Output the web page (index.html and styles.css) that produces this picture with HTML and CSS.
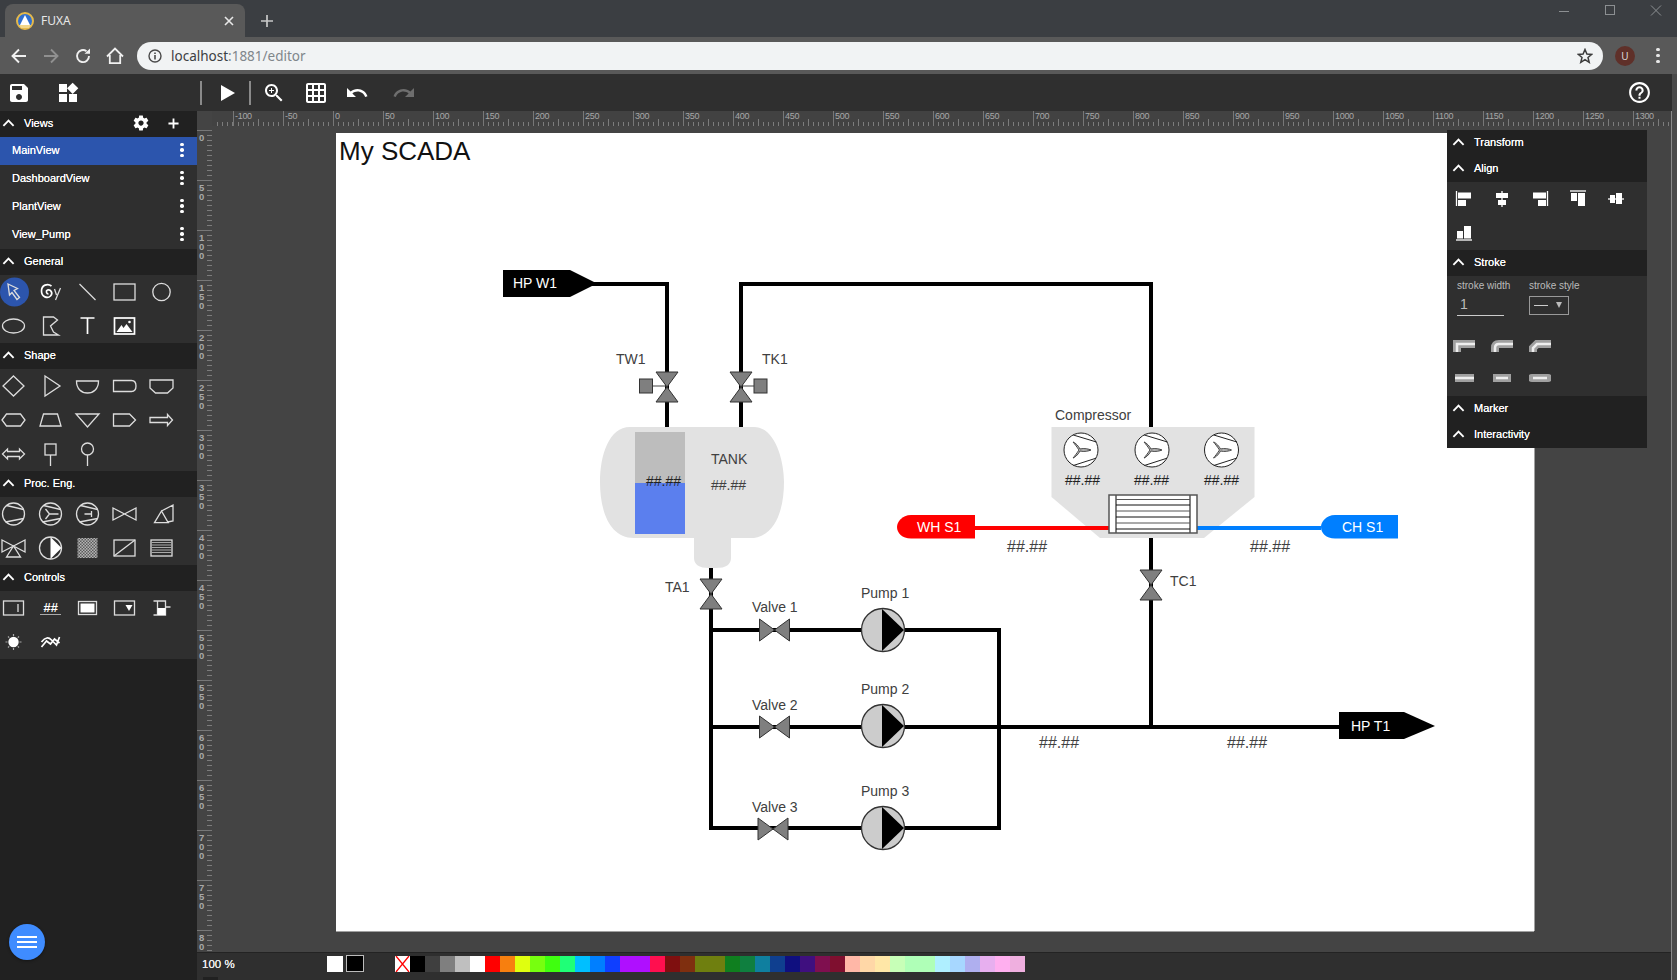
FILE: index.html
```html
<!DOCTYPE html>
<html lang="en">
<head>
<meta charset="utf-8">
<title>FUXA</title>
<link rel="stylesheet" href="styles.css">
</head>
<body>
<div class="tabstrip">
  <div class="tab">
    <svg class="favicon" viewBox="-9 -9 18 18" width="18" height="18"><circle r="8" fill="#2f6fd0" stroke="#e5b94a" stroke-width="2"/><path d="M-5,4 L0,-6 L5,4 Z" fill="#fff"/><path d="M-6,4 H6 L4,7 H-4 Z" fill="#f2d68a"/></svg>
    <span class="tab-title">FUXA</span>
    <svg class="tab-close" viewBox="0 0 10 10" width="10" height="10"><path d="M1,1 L9,9 M9,1 L1,9" stroke="#e8e8e8" stroke-width="1.6"/></svg>
  </div>
  <svg class="new-tab" viewBox="0 0 14 14" width="14" height="14"><path d="M7,1 V13 M1,7 H13" stroke="#c8c8c8" stroke-width="1.7"/></svg>
  <div class="winctl">
    <svg viewBox="0 0 12 12" width="12" height="12"><path d="M1,6.5 H11" stroke="#8c8f92"/></svg>
    <svg viewBox="0 0 12 12" width="12" height="12"><rect x="1.5" y=".5" width="9" height="9" fill="none" stroke="#8c8f92"/></svg>
    <svg viewBox="0 0 12 12" width="12" height="12"><path d="M1,0.5 L11,10.5 M11,0.5 L1,10.5" stroke="#8c8f92"/></svg>
  </div>
</div>
<div class="addrbar">
  <div class="navs">
    <svg viewBox="0 0 18 18" width="18" height="18"><path d="M16,9 H2.5 M9,2.5 L2.5,9 L9,15.5" fill="none" stroke="#f0f0f0" stroke-width="1.9"/></svg>
    <svg viewBox="0 0 18 18" width="18" height="18"><path d="M2,9 H15.5 M9,2.5 L15.5,9 L9,15.5" fill="none" stroke="#909090" stroke-width="1.9"/></svg>
    <svg viewBox="0 0 18 18" width="18" height="18"><path d="M15,9 A6,6 0 1 1 12.5,4.2" fill="none" stroke="#f0f0f0" stroke-width="1.9"/><path d="M10.5,6.8 H16 V1.5 Z" fill="#f0f0f0"/></svg>
    <svg viewBox="0 0 18 18" width="18" height="18"><path d="M1,9.5 L9,1.5 L17,9.5 M3.8,8 V16.2 H14.2 V8" fill="none" stroke="#f0f0f0" stroke-width="1.8"/></svg>
  </div>
  <div class="omnibox">
    <svg class="info" viewBox="0 0 14 14" width="14" height="14"><circle cx="7" cy="7" r="6" fill="none" stroke="#4a4a4a" stroke-width="1.4"/><path d="M7,6 V10.5 M7,3.5 V5" stroke="#4a4a4a" stroke-width="1.6"/></svg>
    <span class="url"><span class="url-host">localhost</span>:1881/editor</span>
    <svg class="star" viewBox="0 0 16 16" width="16" height="16"><path d="M8,1.5 L9.9,6 L14.7,6.4 L11,9.5 L12.2,14.3 L8,11.7 L3.8,14.3 L5,9.5 L1.3,6.4 L6.1,6 Z" fill="none" stroke="#3c3c3c" stroke-width="1.5"/></svg>
  </div>
  <div class="avatar">U</div>
  <div class="kebab-chrome"><i></i><i></i><i></i></div>
</div>
<div class="appframe">
<div class="app">
  <div class="toolbar">
    <div class="tb-group first">
      <svg class="tb-icon" viewBox="0 0 24 24"><path d="M17 3H5c-1.11 0-2 .9-2 2v14c0 1.1.89 2 2 2h14c1.1 0 2-.9 2-2V7l-4-4zm-5 16c-1.66 0-3-1.34-3-3s1.34-3 3-3 3 1.34 3 3-1.34 3-3 3zm3-10H5V5h10v4z"/></svg>
      <svg class="tb-icon" viewBox="0 0 24 24"><path d="M13 13v8h8v-8h-8zM3 21h8v-8H3v8zM3 3v8h8V3H3zm13.66-1.31L11 7.34 16.66 13l5.66-5.66-5.66-5.65z"/></svg>
    </div>
    <div class="tb-sep"></div>
    <svg class="tb-icon play" viewBox="0 0 24 24"><path d="M6 4v16l14-8z"/></svg>
    <div class="tb-sep"></div>
    <div class="tb-group second">
      <svg class="tb-icon" viewBox="0 0 24 24"><path d="M15.5 14h-.79l-.28-.27C15.41 12.59 16 11.11 16 9.5 16 5.91 13.09 3 9.5 3S3 5.91 3 9.5 5.91 16 9.5 16c1.61 0 3.09-.59 4.23-1.57l.27.28v.79l5 4.99L20.49 19l-4.99-5zm-6 0C7.01 14 5 11.99 5 9.5S7.01 5 9.5 5 14 7.01 14 9.5 11.99 14 9.5 14zm2.5-4h-2v2H9v-2H7V9h2V7h1v2h2v1z"/></svg>
      <svg class="tb-icon" viewBox="0 0 24 24"><path d="M20 2H4c-1.1 0-2 .9-2 2v16c0 1.1.9 2 2 2h16c1.1 0 2-.9 2-2V4c0-1.1-.9-2-2-2zM8 20H4v-4h4v4zm0-6H4v-4h4v4zm0-6H4V4h4v4zm6 12h-4v-4h4v4zm0-6h-4v-4h4v4zm0-6h-4V4h4v4zm6 12h-4v-4h4v4zm0-6h-4v-4h4v4zm0-6h-4V4h4v4z"/></svg>
      <svg class="tb-icon" viewBox="0 0 24 24"><path d="M12.5 8c-2.65 0-5.05.99-6.9 2.6L2 7v9h9l-3.62-3.62c1.39-1.16 3.16-1.88 5.12-1.88 3.54 0 6.55 2.31 7.6 5.5l2.37-.78C21.08 11.03 17.15 8 12.5 8z"/></svg>
      <svg class="tb-icon redo" viewBox="0 0 24 24"><path d="M18.4 10.6C16.55 8.99 14.15 8 11.5 8c-4.65 0-8.58 3.03-9.96 7.22L3.9 16c1.05-3.19 4.05-5.5 7.6-5.5 1.95 0 3.73.72 5.12 1.88L13 16h9V7l-3.6 3.6z"/></svg>
    </div>
    <svg class="tb-icon help" viewBox="0 0 24 24"><path d="M11 18h2v-2h-2v2zm1-16C6.48 2 2 6.48 2 12s4.48 10 10 10 10-4.48 10-10S17.52 2 12 2zm0 18c-4.41 0-8-3.59-8-8s3.59-8 8-8 8 3.59 8 8-3.59 8-8 8zm0-14c-2.21 0-4 1.79-4 4h2c0-1.1.9-2 2-2s2 .9 2 2c0 2-3 1.75-3 5h2c0-2.25 3-2.5 3-5 0-2.21-1.79-4-4-4z"/></svg>
  </div>
  <div class="main">
    <aside class="side">
      <div class="sec-head">
        <svg class="chev" viewBox="0 0 14 8"><path d="M1.5,7 L7,1.5 L12.5,7" /></svg>
        <span class="sec-title">Views</span>
        <svg class="gear" viewBox="0 0 24 24"><path d="M19.43 12.98c.04-.32.07-.64.07-.98s-.03-.66-.07-.98l2.11-1.65c.19-.15.24-.42.12-.64l-2-3.46c-.12-.22-.39-.3-.61-.22l-2.49 1c-.52-.4-1.08-.73-1.69-.98l-.38-2.65C14.46 2.18 14.25 2 14 2h-4c-.25 0-.46.18-.49.42l-.38 2.65c-.61.25-1.17.59-1.69.98l-2.49-1c-.23-.09-.49 0-.61.22l-2 3.46c-.13.22-.07.49.12.64l2.11 1.65c-.04.32-.07.65-.07.98s.03.66.07.98l-2.11 1.65c-.19.15-.24.42-.12.64l2 3.46c.12.22.39.3.61.22l2.49-1c.52.4 1.08.73 1.69.98l.38 2.65c.03.24.24.42.49.42h4c.25 0 .46-.18.49-.42l.38-2.65c.61-.25 1.17-.59 1.69-.98l2.49 1c.23.09.49 0 .61-.22l2-3.46c.12-.22.07-.49-.12-.64l-2.11-1.65zM12 15.5c-1.93 0-3.5-1.57-3.5-3.5s1.57-3.5 3.5-3.5 3.5 1.57 3.5 3.5-1.57 3.5-3.5 3.5z"/></svg>
        <svg class="plus" viewBox="0 0 12 12"><path d="M6,0.5 V11.5 M0.5,6 H11.5"/></svg>
      </div>
      <div class="view-row active"><span>MainView</span><div class="dots"><i></i><i></i><i></i></div></div>
      <div class="view-row"><span>DashboardView</span><div class="dots"><i></i><i></i><i></i></div></div>
      <div class="view-row"><span>PlantView</span><div class="dots"><i></i><i></i><i></i></div></div>
      <div class="view-row"><span>View_Pump</span><div class="dots"><i></i><i></i><i></i></div></div>

      <div class="sec-head"><svg class="chev" viewBox="0 0 14 8"><path d="M1.5,7 L7,1.5 L12.5,7"/></svg><span class="sec-title">General</span></div>
      <div class="tools">
        <svg class="ti" viewBox="-18.5 -17 37 34"><circle cx="1" r="14.5" class="sel"/><path d="M-5.5,-8 L4,-3.5 L.5,-1.500 L6,5.500 L3.500,7.500 L-1.500,.5 L-4,3 Z" class="w"/></svg>
        <svg class="ti" viewBox="-18.5 -17 37 34"><path d="M1,-6 C-3,-9 -9,-7 -9,-1 C-9,5 -3,7 0,4 C3,1 0,-3 -3,-2 C-5,-1 -4,2 -2,2" class="w2"/><path d="M4,-3 L6,3 M10,-4 L5,8" class="w"/></svg>
        <svg class="ti" viewBox="-18.5 -17 37 34"><path d="M-8,-8 L8,8" class="w"/></svg>
        <svg class="ti" viewBox="-18.5 -17 37 34"><rect x="-10.5" y="-8" width="21" height="16" class="w"/></svg>
        <svg class="ti" viewBox="-18.5 -17 37 34"><circle r="8.7" class="w"/></svg>
        <svg class="ti" viewBox="-18.5 -17 37 34"><ellipse rx="11" ry="7" class="w"/></svg>
        <svg class="ti" viewBox="-18.5 -17 37 34"><path d="M-7,9 V-9 H3 L7,-6 L0,0 L3,6 L8,9 Z" class="w"/></svg>
        <svg class="ti" viewBox="-18.5 -17 37 34"><path d="M-7,-8 H7 M0,-8 V8" class="w2"/></svg>
        <svg class="ti" viewBox="-18.5 -17 37 34"><rect x="-10" y="-8" width="20" height="16" class="w2"/><path d="M-8,6 L-3,-1 L-1,2 L2,-2 L8,6 Z" class="f"/><circle cx="5" cy="-4" r="1.3" class="f"/></svg>
      </div>

      <div class="sec-head"><svg class="chev" viewBox="0 0 14 8"><path d="M1.5,7 L7,1.5 L12.5,7"/></svg><span class="sec-title">Shape</span></div>
      <div class="tools">
        <svg class="ti" viewBox="-18.5 -17 37 34"><path d="M0,-10 L10.5,0 L0,10 L-10.5,0 Z" class="w"/></svg>
        <svg class="ti" viewBox="-18.5 -17 37 34"><path d="M-5.5,-10 L9.5,0 L-5.5,10 Z" class="w"/></svg>
        <svg class="ti" viewBox="-18.5 -17 37 34"><path d="M-11,-5 H11 C11,3 6,7 0,7 C-6,7 -11,3 -11,-5 Z" class="w"/></svg>
        <svg class="ti" viewBox="-18.5 -17 37 34"><path d="M-11,-5.5 H7 C10,-5.5 11.5,-3 11.5,0 C11.5,3 10,5.5 7,5.5 H-11 Z" class="w"/></svg>
        <svg class="ti" viewBox="-18.5 -17 37 34"><path d="M-11.5,-6 H11.5 V2 L6,7 H-6 L-11.5,2 Z" class="w"/></svg>
        <svg class="ti" viewBox="-18.5 -17 37 34"><path d="M-11.5,0 L-7,-6 H7 L11.5,0 L7,6 H-7 Z" class="w"/></svg>
        <svg class="ti" viewBox="-18.5 -17 37 34"><path d="M-7,-6 H7 L10.5,6 H-10.5 Z" class="w"/></svg>
        <svg class="ti" viewBox="-18.5 -17 37 34"><path d="M-11.5,-6 H11.5 L0,7 Z" class="w"/></svg>
        <svg class="ti" viewBox="-18.5 -17 37 34"><path d="M-11,-6 H5 L11,0 L5,6 H-11 Z" class="w"/></svg>
        <svg class="ti" viewBox="-18.5 -17 37 34"><path d="M-11.5,-2.5 H6 V-5.5 L11,0 L6,5.5 V2.5 H-11.5 Z" class="w"/></svg>
        <svg class="ti" viewBox="-18.5 -17 37 34"><path d="M-11,0 L-6,-5 V-2.5 H6 V-5 L11,0 L6,5 V2.5 H-6 V5 Z" class="w"/></svg>
        <svg class="ti" viewBox="-18.5 -17 37 34"><rect x="-5.5" y="-10" width="11" height="11" class="w"/><path d="M0,1 V12" class="w"/></svg>
        <svg class="ti" viewBox="-18.5 -17 37 34"><circle cy="-5" r="6" class="w"/><path d="M0,1 V12" class="w"/></svg>
      </div>

      <div class="sec-head"><svg class="chev" viewBox="0 0 14 8"><path d="M1.5,7 L7,1.5 L12.5,7"/></svg><span class="sec-title">Proc. Eng.</span></div>
      <div class="tools">
        <svg class="ti" viewBox="-18.5 -17 37 34"><circle r="11" class="w"/><path d="M-7,-8.5 L10,-4.5 M-8,8 L10,4.5" class="w"/></svg>
        <svg class="ti" viewBox="-18.5 -17 37 34"><circle r="11" class="w"/><path d="M-7,-8.5 L10,-4.5 M-8,8 L10,4.5 M-1,0 H8 M-1,0 L-5,-5 M-1,0 L-5,5" class="w"/></svg>
        <svg class="ti" viewBox="-18.5 -17 37 34"><circle r="11" class="w"/><path d="M-7,-8.5 L10,-4.5 M-8,8 L10,4.5 M-3,0 H4 M4,-3 V3" class="w"/></svg>
        <svg class="ti" viewBox="-18.5 -17 37 34"><path d="M-11.5,-6 L11.5,6 V-6 L-11.5,6 Z" class="w"/></svg>
        <svg class="ti" viewBox="-18.5 -17 37 34"><path d="M-7,8.7 H6.700 L0,-3 Z M0,-3 L11.500,-9 V7 L6,8" class="w"/></svg>
        <svg class="ti" viewBox="-18.5 -17 37 34"><path d="M-11.5,-8 L11.5,4 V-8 L-11.5,4 Z M-7,9 H7 L0,-2 Z" class="w"/></svg>
        <svg class="ti" viewBox="-18.5 -17 37 34"><circle r="11" class="w"/><path d="M0,-11 L11,0 L0,11 Z" class="f"/></svg>
        <svg class="ti" viewBox="-18.5 -17 37 34"><defs><pattern id="chk" width="3" height="3" patternUnits="userSpaceOnUse"><rect width="3" height="3" fill="#e0e0e0"/><rect width="1.500" height="1.500" fill="#2f2f2f"/><rect x="1.500" y="1.500" width="1.500" height="1.500" fill="#2f2f2f"/></pattern></defs><rect x="-10" y="-10" width="20" height="20" fill="url(#chk)"/></svg>
        <svg class="ti" viewBox="-18.5 -17 37 34"><rect x="-10.5" y="-8" width="21" height="16" class="w"/><path d="M-10.5,8 L10.5,-8" class="w"/></svg>
        <svg class="ti" viewBox="-18.5 -17 37 34"><rect x="-10.5" y="-8" width="21" height="16" class="w"/><path d="M-10,-5.5 H10 M-10,-3 H10 M-10,-.5 H10 M-10,2 H10 M-10,4.5 H10" class="g"/></svg>
      </div>

      <div class="sec-head"><svg class="chev" viewBox="0 0 14 8"><path d="M1.5,7 L7,1.5 L12.5,7"/></svg><span class="sec-title">Controls</span></div>
      <div class="tools">
        <svg class="ti" viewBox="-18.5 -17 37 34"><rect x="-10" y="-7" width="20" height="14" class="w"/><path d="M4.5,-4 V4" class="w"/></svg>
        <div class="ti hash"><span>##</span></div>
        <svg class="ti" viewBox="-18.5 -17 37 34"><rect x="-9" y="-6.5" width="18" height="13" class="w"/><rect x="-7" y="-4.5" width="14" height="9" class="f"/></svg>
        <svg class="ti" viewBox="-18.5 -17 37 34"><rect x="-10" y="-7" width="20" height="14" class="w"/><path d="M1,-3 H8 L4.5,3 Z" class="f"/></svg>
        <svg class="ti" viewBox="-18.5 -17 37 34"><path d="M-8,-7 H-4 M-8,7 H-4 M-4,-7 H4 V7 H-4 Z M4,-1 H9" class="w"/><rect x="-4" y="0" width="8" height="7" class="f"/></svg>
        <svg class="ti" viewBox="-18.5 -17 37 34"><circle r="5.200" class="f"/><path d="M0,-8 V-6 M0,6 V8 M-8,0 H-6 M6,0 H8 M-5.500,-5.500 L-4.300,-4.300 M4.300,4.300 L5.500,5.500 M-5.500,5.500 L-4.300,4.300 M4.300,-4.300 L5.500,-5.500" class="g"/></svg>
        <svg class="ti" viewBox="-18.5 -17 37 34"><path d="M-9,5 L-4,-1 L0,2 L4,-3 L9,1 M-9,0 C-5,-5 -2,-5 1,-2 L6,3 L9,-5" class="w2"/></svg>
      </div>
      <div class="fab"><i></i><i></i><i></i></div>
    </aside>

    <section class="work">
      <div class="hruler">
        <div class="hcell stub"></div>
        <div class="hcell">-100</div><div class="hcell">-50</div><div class="hcell">0</div><div class="hcell">50</div><div class="hcell">100</div><div class="hcell">150</div><div class="hcell">200</div><div class="hcell">250</div><div class="hcell">300</div><div class="hcell">350</div><div class="hcell">400</div><div class="hcell">450</div><div class="hcell">500</div><div class="hcell">550</div><div class="hcell">600</div><div class="hcell">650</div><div class="hcell">700</div><div class="hcell">750</div><div class="hcell">800</div><div class="hcell">850</div><div class="hcell">900</div><div class="hcell">950</div><div class="hcell">1000</div><div class="hcell">1050</div><div class="hcell">1100</div><div class="hcell">1150</div><div class="hcell">1200</div><div class="hcell">1250</div><div class="hcell">1300</div>
      </div>
      <div class="stage">
        <div class="vruler">
          <div class="vcell">0</div><div class="vcell">50</div><div class="vcell">100</div><div class="vcell">150</div><div class="vcell">200</div><div class="vcell">250</div><div class="vcell">300</div><div class="vcell">350</div><div class="vcell">400</div><div class="vcell">450</div><div class="vcell">500</div><div class="vcell">550</div><div class="vcell">600</div><div class="vcell">650</div><div class="vcell">700</div><div class="vcell">750</div><div class="vcell">800</div>
        </div>
        <div class="canvas-area">
          <svg class="sheet" viewBox="336 133 1198 798" width="1198" height="798">
            <defs>
              <g id="valve"><path d="M-11,-15 H11 L0,0 Z M-11,15 H11 L0,0 Z" class="valve"/></g>
              <g id="pump"><circle r="21.500" class="pump"/><path d="M-1,-21 L21,0 L-1,21 Z" fill="#000"/></g>
              <g id="fan"><circle r="17" class="fan"/><path d="M-7.7,-15 L15.5,-8 M-7.7,15.5 L15,8.2" class="thin"/><path d="M-2,0 C-4,-3 -7,-7 -8,-8 C-7,-8 -3,-5 -1,-1 C3,-2 8,-1 10,0 C8,1 3,2 -1,1 C-3,5 -7,8 -8,8 C-7,7 -4,3 -2,0 Z" class="blade"/></g>
            </defs>
            <text x="339" y="160" class="title">My SCADA</text>

            <path d="M570,284 H667 V427 M741,427 V284 H1151 V428 M1151,538 V727 M711,568 V828 H999 V630 H711 M711,727 H1339" class="pipe"/>

            <path d="M503,270 H570 L597,283.5 L570,297 H503 Z" fill="#000"/>
            <text x="513" y="288" class="tagtext">HP W1</text>
            <path d="M1339,712 H1404 L1435,726 L1404,739 H1339 Z" fill="#000"/>
            <text x="1351" y="731" class="tagtext">HP T1</text>

            <path d="M630,427 H754 C775,427 784,460 784,482 C784,510 775,538 750,538 H731 V558 Q731,568 716,568 H709 Q694,568 694,558 V538 H634 C609,538 600,510 600,482 C600,455 609,427 630,427 Z" fill="#e2e2e2"/>
            <rect x="635" y="432" width="50" height="51" fill="#bdbdbd"/>
            <rect x="635" y="483" width="50" height="51" fill="#5b7fee"/>
            <text x="646" y="486" class="lbl dark">##.##</text>
            <text x="711" y="464" class="lbl">TANK</text>
            <text x="711" y="490" class="lbl">##.##</text>

            <path d="M652,386 H667 M741,386 H755" stroke="#444" stroke-width="1.2"/>
            <rect x="639.5" y="379" width="13" height="14" class="valve"/>
            <rect x="754" y="379" width="13" height="14" class="valve"/>
            <use href="#valve" x="667" y="387"/>
            <use href="#valve" x="741" y="387"/>
            <use href="#valve" x="711" y="594"/>
            <use href="#valve" x="1151" y="585"/>
            <use href="#valve" transform="translate(774.5,630) rotate(90)"/>
            <use href="#valve" transform="translate(774.5,727) rotate(90)"/>
            <use href="#valve" transform="translate(773,829) rotate(90)"/>
            <text x="616" y="364" class="lbl">TW1</text>
            <text x="762" y="364" class="lbl">TK1</text>
            <text x="665" y="592" class="lbl">TA1</text>
            <text x="1170" y="586" class="lbl">TC1</text>

            <use href="#pump" x="883" y="630"/>
            <use href="#pump" x="883" y="726"/>
            <use href="#pump" x="883" y="828"/>
            <text x="752" y="612" class="lbl">Valve 1</text>
            <text x="752" y="710" class="lbl">Valve 2</text>
            <text x="752" y="812" class="lbl">Valve 3</text>
            <text x="861" y="598" class="lbl">Pump 1</text>
            <text x="861" y="694" class="lbl">Pump 2</text>
            <text x="861" y="796" class="lbl">Pump 3</text>

            <path d="M1051.5,427 H1254.5 V497 L1204,538 H1100 L1051.5,497 Z" fill="#e2e2e2"/>
            <use href="#fan" x="1081" y="450"/>
            <use href="#fan" x="1152" y="450"/>
            <use href="#fan" x="1221.5" y="450"/>
            <text x="1055" y="420" class="lbl">Compressor</text>
            <text x="1065" y="485" class="lbl dark">##.##</text>
            <text x="1134" y="485" class="lbl dark">##.##</text>
            <text x="1204" y="485" class="lbl dark">##.##</text>

            <path d="M975,528 H1109" class="hot"/>
            <path d="M1197,528 H1321" class="cold"/>
            <path d="M975,515 H911 C902,515 897,522 897,527 C897,533 902,538.500 911,538.500 H975 Z" fill="#ff0000"/>
            <path d="M1321,515 H1398 V538.500 H1335 C1326,538.500 1321,533 1321,527 C1321,522 1326,515 1335,515 Z" fill="#007fff"/>
            <text x="917" y="532" class="tagtext">WH S1</text>
            <text x="1342" y="532" class="tagtext">CH S1</text>
            <rect x="1109" y="495" width="88" height="38" class="hx"/>
            <path d="M1116,495 V533 M1190,495 V533" class="hxv"/>
            <path d="M1116,505 H1190 M1116,517 H1190 M1116,529 H1190" class="hxb"/>
            <path d="M1116,499.500 H1190 M1116,511 H1190 M1116,523 H1190" class="hxg"/>
            <text x="1007" y="552" class="lbl big">##.##</text>
            <text x="1250" y="552" class="lbl big">##.##</text>
            <text x="1039" y="747.500" class="lbl big">##.##</text>
            <text x="1227" y="747.500" class="lbl big">##.##</text>
          </svg>
        </div>
      </div>
      <div class="panel">
        <div class="sec-head p"><svg class="chev" viewBox="0 0 14 8"><path d="M1.5,7 L7,1.500 L12.500,7"/></svg><span class="sec-title">Transform</span></div>
        <div class="sec-head p"><svg class="chev" viewBox="0 0 14 8"><path d="M1.5,7 L7,1.500 L12.500,7"/></svg><span class="sec-title">Align</span></div>
        <div class="aligns">
          <svg viewBox="-19 -17 38 34"><path d="M-7.500,-8 V7" class="wt"/><rect x="-6" y="-6.500" width="13" height="6" class="f"/><rect x="-6" y="1" width="8" height="6" class="f"/></svg>
          <svg viewBox="-19 -17 38 34"><path d="M0,-8 V8" class="wt"/><rect x="-6" y="-6" width="12" height="5" class="f"/><rect x="-4" y="1" width="8" height="5" class="f"/></svg>
          <svg viewBox="-19 -17 38 34"><path d="M7.500,-8 V7" class="wt"/><rect x="-7" y="-6.500" width="13" height="6" class="f"/><rect x="-2" y="1" width="8" height="6" class="f"/></svg>
          <svg viewBox="-19 -17 38 34"><path d="M-8,-8 H8" class="wt"/><rect x="-7" y="-6" width="6" height="8" class="f"/><rect x="0" y="-6" width="7" height="13" class="f"/></svg>
          <svg viewBox="-19 -17 38 34"><path d="M-8,0 H8" class="wt"/><rect x="-6" y="-4" width="5" height="8" class="f"/><rect x="0" y="-6" width="6" height="11" class="f"/></svg>
          <svg viewBox="-19 -17 38 34"><path d="M-8,7 H8" class="wt"/><rect x="-7" y="-2" width="6" height="7.500" class="f"/><rect x="0" y="-7" width="7" height="12.500" class="f"/></svg>
        </div>
        <div class="sec-head p"><svg class="chev" viewBox="0 0 14 8"><path d="M1.5,7 L7,1.500 L12.500,7"/></svg><span class="sec-title">Stroke</span></div>
        <div class="stroke">
          <div class="stroke-fields">
            <div class="field w1"><span class="flabel">stroke width</span><span class="finput">1</span></div>
            <div class="field"><span class="flabel">stroke style</span><span class="fselect"><i class="dash"></i><i class="caret"></i></span></div>
          </div>
          <div class="caps">
            <svg viewBox="0 0 22 12"><path d="M4,12 V4 H22" class="capo"/><path d="M4,12 V4 H22" class="capi"/></svg>
            <svg viewBox="0 0 22 12"><path d="M4,12 V8 Q4,4 8,4 H22" class="capo"/><path d="M4,12 V8 Q4,4 8,4 H22" class="capi"/></svg>
            <svg viewBox="0 0 22 12"><path d="M4,12 V8 L8,4 H22" class="capo"/><path d="M4,12 V8 L8,4 H22" class="capi"/></svg>
            <svg viewBox="0 0 22 12"><path d="M2,6 H21" class="capo"/><path d="M2,6 H21" class="capi"/></svg>
            <svg viewBox="0 0 22 12"><path d="M2,6 H20" class="capo"/><path d="M5,6 H17" class="capi"/></svg>
            <svg viewBox="0 0 22 12"><path d="M3,6 H19" class="capo round"/><path d="M4,6 H18" class="capi"/></svg>
          </div>
        </div>
        <div class="sec-head p"><svg class="chev" viewBox="0 0 14 8"><path d="M1.5,7 L7,1.500 L12.500,7"/></svg><span class="sec-title">Marker</span></div>
        <div class="sec-head p"><svg class="chev" viewBox="0 0 14 8"><path d="M1.5,7 L7,1.500 L12.500,7"/></svg><span class="sec-title">Interactivity</span></div>
      </div>
      <div class="statusbar">
        <span class="zoomval">100 %</span>
        <span class="cur-fill"></span>
        <span class="cur-stroke"></span>
        <div class="palette">
          <svg class="sw none" viewBox="0 0 15 16"><rect width="15" height="16" fill="#fff"/><path d="M1,0 L14,16 M14,0 L1,16" stroke="#f00" stroke-width="1.300"/></svg>
          <i class="sw c1"></i><i class="sw c2"></i><i class="sw c3"></i><i class="sw c4"></i><i class="sw c5"></i><i class="sw c6"></i><i class="sw c7"></i><i class="sw c8"></i><i class="sw c9"></i><i class="sw c10"></i><i class="sw c11"></i><i class="sw c12"></i><i class="sw c13"></i><i class="sw c14"></i><i class="sw c15"></i><i class="sw c15"></i><i class="sw c17"></i><i class="sw c18"></i><i class="sw c19"></i><i class="sw c20"></i><i class="sw c20"></i><i class="sw c22"></i><i class="sw c23"></i><i class="sw c24"></i><i class="sw c25"></i><i class="sw c26"></i><i class="sw c27"></i><i class="sw c28"></i><i class="sw c29"></i><i class="sw c30"></i><i class="sw c31"></i><i class="sw c32"></i><i class="sw c33"></i><i class="sw c34"></i><i class="sw c34"></i><i class="sw c36"></i><i class="sw c37"></i><i class="sw c38"></i><i class="sw c39"></i><i class="sw c40"></i><i class="sw c41"></i>
        </div>
        <span class="mini"></span>
      </div>
    </section>
  </div>
</div>
<div class="outer-scroll"></div>
</div>
</body>
</html>
```

FILE: styles.css
```css
* { box-sizing: border-box; }
html, body { margin: 0; height: 100%; overflow: hidden; }
body { width: 1677px; height: 980px; display: flex; flex-direction: column; font-family: "Liberation Sans", Arial, sans-serif; background: #444; }

/* browser chrome */
.tabstrip { height: 37px; flex: none; background: #3b3e42; display: flex; align-items: flex-end; position: relative; padding-left: 5px; }
.tab { width: 240px; height: 33px; background: #595959; border-radius: 8px 8px 0 0; display: flex; align-items: center; padding: 0 11px; }
.favicon { flex: none; }
.tab-title { margin-left: 7px; font-size: 12px; color: #e8e8e8; font-family: "Noto Sans", sans-serif; flex: 1; }
.tab-close { flex: none; }
.new-tab { margin: 0 0 9px 15px; }
.winctl { position: absolute; right: 15px; top: 5px; display: flex; gap: 34px; }
.addrbar { height: 37px; flex: none; background: #595959; display: flex; align-items: center; padding-left: 10px; }
.navs { display: flex; gap: 14px; width: 127px; flex: none; }
.omnibox { width: 1466px; height: 28px; background: #f1f3f4; border-radius: 14px; display: flex; align-items: center; padding: 0 10px 0 11px; margin-top: 1px; }
.info { flex: none; }
.url { margin-left: 9px; font-family: "Noto Sans", sans-serif; font-size: 13.5px; color: #80868b; flex: 1; }
.url-host { color: #3c4043; }
.avatar { width: 20px; height: 20px; border-radius: 50%; background: #5f3029; color: #ddd; font-size: 10px; display: flex; align-items: center; justify-content: center; margin-left: 12px; font-family: "Noto Sans", sans-serif; }
.kebab-chrome { display: flex; flex-direction: column; gap: 2.5px; margin-left: 21px; }
.kebab-chrome i { width: 3.5px; height: 3.5px; border-radius: 50%; background: #e8e8e8; display: block; }

/* app */
.appframe { flex: 1; display: flex; min-height: 0; }
.app { width: 1672px; display: flex; flex-direction: column; min-height: 0; }
.outer-scroll { width: 5px; background: #4a4a4a; }
.toolbar { height: 37px; flex: none; background: #2f2f2f; display: flex; align-items: center; }
.tb-icon { width: 24px; height: 24px; fill: #fff; flex: none; }
.tb-group { display: flex; align-items: center; }
.tb-group.first { width: 200px; padding-left: 7px; gap: 25px; }
.tb-group.second { gap: 17.500px; margin-left: 11px; }
.tb-sep { width: 2px; height: 24px; background: #8a8a8a; flex: none; }
.play { fill: #fff; margin: 0 10px 0 13px; }
.redo { fill: #6e6e6e; margin-left: 5px; }
.help { margin-left: auto; margin-right: 20px; width: 25px; height: 25px; }

.main { flex: 1; display: flex; min-height: 0; }
.side { width: 197px; flex: none; background: #212121; position: relative; }
.sec-head { height: 26px; background: #212121; display: flex; align-items: center; color: #fff; padding: 0 0 2px 2px; }
.chev { width: 13px; height: 8px; fill: none; stroke: #fff; stroke-width: 2; flex: none; }
.sec-title { font-size: 11px; margin-left: 9px; flex: 1; text-shadow: 0 0 .6px #fff; }
.gear { width: 18px; height: 18px; fill: #fff; flex: none; margin-right: 18px; }
.plus { width: 11px; height: 11px; stroke: #fff; stroke-width: 2; flex: none; margin-right: 18px; }
.view-row { height: 28px; background: #2f2f2f; display: flex; align-items: center; justify-content: space-between; padding: 0 13.500px 2px 12px; color: #fff; font-size: 11px; }
.view-row span { text-shadow: 0 0 .6px #fff; }
.view-row.active { background: #2c55ad; }
.dots { display: flex; flex-direction: column; gap: 2px; }
.dots i { width: 3.400px; height: 3.400px; background: #fff; border-radius: 50%; display: block; }
.tools { background: #2f2f2f; display: grid; grid-template-columns: repeat(5, 37px); grid-auto-rows: 34px; overflow: hidden; }
.ti { width: 37px; height: 34px; position: relative; left: -5px; fill: none; }
.w { fill: none; stroke: #ddd; stroke-width: 1.300; }
.w2 { fill: none; stroke: #fff; stroke-width: 1.700; }
.f { fill: #fff; stroke: none; }
.g { fill: none; stroke: #aaa; stroke-width: 1.200; }
.sel { fill: #2c55ad; }
.hash { display: flex; align-items: center; justify-content: center; }
.hash span { font: italic bold 13px "Liberation Sans", sans-serif; color: #fff; border-bottom: 1px solid #aaa; width: 21px; text-align: center; line-height: 13px; }
.fab { position: absolute; left: 9px; bottom: 20px; width: 36px; height: 36px; border-radius: 50%; background: #3f8cff; display: flex; flex-direction: column; align-items: center; justify-content: center; gap: 3px; box-shadow: 0 1px 3px rgba(0,0,0,.4); }
.fab i { width: 20px; height: 2px; background: #fff; display: block; }

.work { flex: 1; min-width: 0; background: #444; display: flex; flex-direction: column; position: relative; border-right: 1px solid #8a8a8a; }
.hruler { height: 15px; flex: none; margin-left: 15px; display: flex; overflow: hidden; margin-bottom: 4px; background: #424242; }
.hcell { flex: 0 0 50px; border-left: 1px solid #777; color: #a8a8a8; font-size: 9px; line-height: 11px; padding-left: 1px; letter-spacing: -.3px; height: 15px;
  background-image: repeating-linear-gradient(to right, transparent 0 4px, #7c7c7c 4px 5px), linear-gradient(#7c7c7c, #7c7c7c);
  background-size: 100% 4px, 1px 7px; background-position: 0 100%, 24px 100%; background-repeat: no-repeat; }
.hcell.stub { flex-basis: 21px; border-left: 0; background-position: 1px 100%, 50px 100%; }
.stage { flex: 1; min-height: 0; display: flex; }
.vruler { width: 15px; flex: none; overflow: hidden; display: flex; flex-direction: column; }
.vcell { flex: 0 0 50px; border-top: 1px solid #777; color: #a8a8a8; font-size: 9.500px; font-weight: bold; line-height: 9px; width: 15px; padding: 2px 7px 0 2px; word-break: break-all;
  background-image: repeating-linear-gradient(to bottom, transparent 0 4px, #7c7c7c 4px 5px);
  background-size: 5px 100%; background-position: 100% 0; background-repeat: no-repeat; }
.canvas-area { flex: 1; min-width: 0; padding: 3px 0 0 124px; }
.sheet { display: block; background: #fff; box-shadow: 0 1px 0 #a0a0a0, 1px 0 0 #a0a0a0; }
.title { font-size: 26px; fill: #111; }
.lbl { font-size: 14px; fill: #404040; }
.lbl.dark { fill: #222; }
.lbl.big { font-size: 16px; }
.tagtext { font-size: 14px; fill: #fff; }
.pipe { fill: none; stroke: #000; stroke-width: 4; }
.hot { stroke: #ff0000; stroke-width: 4; }
.cold { stroke: #007fff; stroke-width: 4; }
.valve { fill: #7f7f7f; stroke: #333; stroke-width: 1; }
.pump { fill: #ccc; stroke: #333; stroke-width: 1.300; }
.fan { fill: #fff; stroke: #222; stroke-width: 1; }
.thin { stroke: #222; stroke-width: 1; }
.blade { fill: #bbb; stroke: #444; stroke-width: 1; }
.hx { fill: #fff; stroke: #555; stroke-width: 1.500; }
.hxv { stroke: #555; stroke-width: 1.500; }
.hxb { stroke: #111; stroke-width: 1; }
.hxg { stroke: #555; stroke-width: 1; }

/* property panel */
.panel { position: absolute; left: 1250px; top: 19px; width: 200px; background: #2f2f2f; }
.sec-head.p { padding-left: 5px; }
.aligns { display: grid; grid-template-columns: repeat(5, 38px); grid-auto-rows: 34px; overflow: hidden; }
.aligns svg { width: 38px; height: 34px; position: relative; left: -2px; }
.wt { stroke: #fff; stroke-width: 1.300; fill: none; }
.stroke { height: 120px; padding: 4px 0 0 10px; }
.stroke-fields { display: flex; }
.field { display: flex; flex-direction: column; color: #ccc; width: 72px; }
.flabel { font-size: 10px; line-height: 12px; color: #bbb; white-space: nowrap; }
.finput { width: 47px; height: 24px; border-bottom: 1px solid #ccc; font-size: 14px; line-height: 24px; padding-left: 3px; color: #bbb; }
.fselect { width: 40px; height: 19px; border: 1px solid #999; margin-top: 4px; display: flex; align-items: center; gap: 8px; padding-left: 4px; }
.dash { width: 14px; height: 1px; background: #ccc; display: block; }
.caret { width: 0; height: 0; border-left: 3.500px solid transparent; border-right: 3.500px solid transparent; border-top: 6px solid #bbb; display: block; margin-top: -2px; }
.caps { display: grid; grid-template-columns: repeat(3, 38px); grid-auto-rows: 32px; margin: 24px 0 0 -4px; }
.caps svg { width: 22px; height: 12px; align-self: start; }
.capo { fill: none; stroke: #a0a0a0; stroke-width: 8; }
.capo.round { stroke-linecap: round; }
.capi { fill: none; stroke: #eee; stroke-width: 2.500; }

/* status bar */
.statusbar { height: 28px; flex: none; background: #2f2f2f; border-top: 1px solid #232323; display: flex; align-items: center; position: relative; padding-bottom: 6px; z-index: 1; }
.zoomval { margin-left: 5px; width: 125px; font-size: 11.500px; color: #eee; flex: none; text-shadow: 0 0 .5px #fff; }
.cur-fill { width: 16px; height: 16px; background: #fff; flex: none; }
.cur-stroke { width: 18px; height: 17px; background: #000; border: 1px solid #bbb; margin-left: 3px; flex: none; }
.palette { display: flex; margin-left: 31px; height: 16px; }
.sw { width: 15px; height: 16px; display: block; flex: none; }
.mini { position: absolute; left: 6px; bottom: 0; width: 15px; height: 3px; background: #212121; }
.c1 { background: #000; } .c2 { background: #3f3f3f; } .c3 { background: #7f7f7f; } .c4 { background: #bfbfbf; } .c5 { background: #fff; }
.c6 { background: #f00; } .c7 { background: #f77f0f; } .c8 { background: #dfff0f; } .c9 { background: #77ff0f; } .c10 { background: #3fff0f; }
.c11 { background: #1fff77; } .c12 { background: #00bfff; } .c13 { background: #007fff; } .c14 { background: #0f3fff; } .c15 { background: #af0fff; }
.c17 { background: #ff0f4f; } .c18 { background: #7f0f0f; } .c19 { background: #7f2f0f; } .c20 { background: #6f7f0f; }
.c22 { background: #0f7f1f; } .c23 { background: #0f7f3f; } .c24 { background: #0f7f9f; } .c25 { background: #0f3f8f; } .c26 { background: #0f0f7f; }
.c27 { background: #3f0f7f; } .c28 { background: #7f0f4f; } .c29 { background: #7f0f2f; } .c30 { background: #ffb7a7; } .c31 { background: #ffd7a7; }
.c32 { background: #ffe7a7; } .c33 { background: #c7ffb7; } .c34 { background: #afffb7; } .c36 { background: #afefff; } .c37 { background: #a7d7ff; }
.c38 { background: #afafef; } .c39 { background: #e7afef; } .c40 { background: #ffafef; } .c41 { background: #efafdf; }
```
